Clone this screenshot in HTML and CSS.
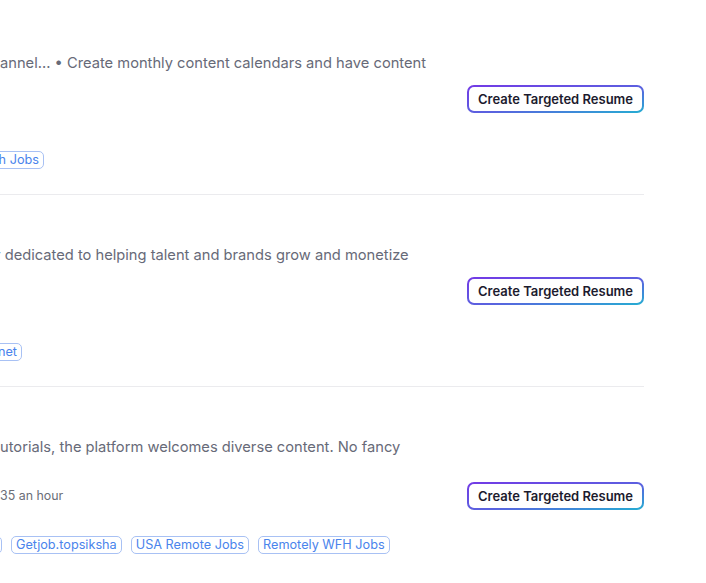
FILE: index.html
```html
<!DOCTYPE html>
<html lang="en">
<head>
<meta charset="utf-8">
<title>Jobs</title>
<link rel="stylesheet" href="styles.css">
</head>
<body>
<main class="list">
  <article class="card">
    <p class="desc">annel... • Create monthly content calendars and have content</p>
    <div class="meta">
      <div class="info"></div>
      <button class="cta">Create Targeted Resume</button>
    </div>
    <div class="tags">
      <span class="stub stub-1"><span class="tag">Remote Tech Jobs</span></span>
    </div>
  </article>
  <article class="card">
    <p class="desc desc-cut">r dedicated to helping talent and brands grow and monetize</p>
    <div class="meta">
      <div class="info"></div>
      <button class="cta">Create Targeted Resume</button>
    </div>
    <div class="tags">
      <span class="stub stub-2"><span class="tag">Getjob.net</span></span>
    </div>
  </article>
  <article class="card">
    <p class="desc">utorials, the platform welcomes diverse content. No fancy</p>
    <div class="meta">
      <div class="info"><span class="salary">35 an hour</span></div>
      <button class="cta">Create Targeted Resume</button>
    </div>
    <div class="tags">
      <span class="stub stub-3"><span class="tag">Remote Jobs</span></span>
      <span class="tag">Getjob.topsiksha</span>
      <span class="tag">USA Remote Jobs</span>
      <span class="tag">Remotely WFH Jobs</span>
    </div>
  </article>
</main>
</body>
</html>
```
FILE: styles.css
```css
* { box-sizing: border-box; }
html, body { margin: 0; padding: 0; background: #ffffff; }
body {
  font-family: "Inter", "Open Sans", sans-serif;
  color: #1c1b2e;
  padding-top: 3px;
  overflow: hidden;
}
.list {
  width: 644px;
  display: flex;
  flex-direction: column;
}
.card {
  height: 192px;
  display: flex;
  flex-direction: column;
  padding: 50px 0 25px 0;
  border-bottom: 1px solid #ebebee;
}
.card:last-child { border-bottom: none; }
.desc {
  margin: 0;
  font-size: 14.7px;
  line-height: 20px;
  color: #676a78;
  white-space: nowrap;
}
.desc-cut { margin-left: -5px; }
.meta {
  margin-top: 12px;
  display: flex;
  justify-content: space-between;
  align-items: center;
}
.info { display: flex; flex-direction: column; }
.salary {
  padding: 18px 0;
  font-size: 12.4px;
  line-height: 18px;
  color: #6b6e78;
  white-space: nowrap;
}
.cta {
  height: 28px;
  padding: 0 9px;
  font-family: inherit;
  font-size: 13px;
  font-weight: 600;
  color: #1c1b2e;
  border: 2px solid transparent;
  border-radius: 7px;
  background:
    linear-gradient(#ffffff, #ffffff) padding-box,
    linear-gradient(to bottom right, #7339e6, #5a62df 55%, #24afd2) border-box;
  white-space: nowrap;
  cursor: pointer;
}
.tags {
  margin-top: auto;
  display: flex;
  gap: 9px;
  align-items: center;
}
.stub {
  display: flex;
  justify-content: flex-end;
  flex: none;
}
.stub-1 { width: 44px; }
.stub-2 { width: 22px; }
.stub-3 { width: 2px; }
.tag {
  flex: none;
  height: 18px;
  padding: 0 4px;
  font-size: 12.7px;
  line-height: 16px;
  color: #4a84ec;
  border: 1px solid #a8c1f4;
  border-radius: 5px;
  white-space: nowrap;
}
```
